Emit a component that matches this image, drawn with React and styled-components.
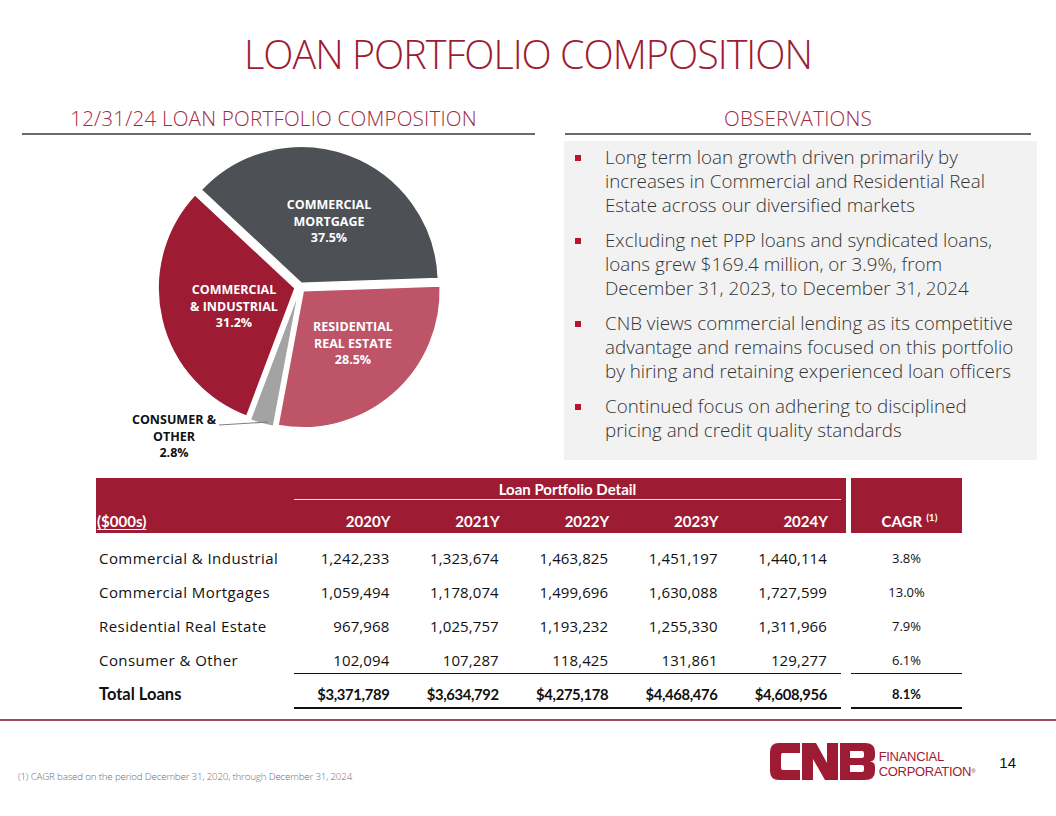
import React from "react";
import styled, { createGlobalStyle } from "styled-components";

const RED = "#9e1c33";

const GlobalStyle = createGlobalStyle`
  html, body {
    margin: 0;
    padding: 0;
    background: #ffffff;
  }
  body {
    font-family: "Open Sans", "Liberation Sans", sans-serif;
  }
`;

const Slide = styled.div`
  width: 1056px;
  height: 816px;
  overflow: hidden;
  background: #ffffff;
  display: flex;
  flex-direction: column;
`;

const Title = styled.h1`
  margin: 0;
  padding-top: 34px;
  height: 76px;
  box-sizing: border-box;
  text-align: center;
  font-family: "Open Sans", sans-serif;
  font-weight: 300;
  font-size: 39.5px;
  line-height: 40px;
  letter-spacing: -1px;
  color: ${RED};
`;

const Columns = styled.div`
  display: flex;
  gap: 30px;
  padding-left: 22px;
  margin-top: 26px;
`;

const Column = styled.div`
  width: ${(p) => p.$width}px;
  display: flex;
  flex-direction: column;
`;

const SectionHeading = styled.h2`
  margin: 0;
  height: 33px;
  box-sizing: border-box;
  padding: 3px ${(p) => p.$shift || 0}px 0 0;
  border-bottom: 2px solid #6a6a6a;
  text-align: center;
  font-family: "Open Sans", sans-serif;
  font-weight: 300;
  font-size: 20.6px;
  line-height: 26px;
  letter-spacing: 0.2px;
  color: #a02a40;
`;

const ObservationBox = styled.div`
  margin: 6px -6px 0 -1px;
  height: 319px;
  box-sizing: border-box;
  background: #f2f2f2;
  padding: 4px 4px 0 11px;
`;

const BulletList = styled.ul`
  list-style: none;
  margin: 0;
  padding: 0;
`;

const Bullet = styled.li`
  display: flex;
  margin-bottom: 11px;
  font-weight: 300;
  font-size: 18.8px;
  line-height: 24px;
  letter-spacing: 0;
  color: #333333;
  white-space: nowrap;

  &::before {
    content: "";
    flex: none;
    width: 6px;
    height: 6px;
    margin: 10px 24px 0 0;
    background: #c0122c;
  }
`;

const Table = styled.div`
  margin: 13px 0 0 96px;
  width: 866px;
  font-family: "Open Sans", sans-serif;
  color: #111;
`;

const HeaderRow = styled.div`
  display: flex;
  margin-bottom: 13px;
`;

const MainHeader = styled.div`
  width: 750px;
  height: 55px;
  background: ${RED};
  display: flex;
  flex-direction: column;
  font-family: Lato, "Open Sans", sans-serif;
  font-weight: 700;
  font-size: 15px;
  color: #ffffff;
`;

const GroupTitle = styled.div`
  margin-left: 198px;
  width: 547px;
  height: 22px;
  box-sizing: border-box;
  border-bottom: 1.5px solid #f4dfe3;
  text-align: center;
  line-height: 22px;
`;

const HeaderCells = styled.div`
  display: flex;
  align-items: flex-end;
  flex: 1;
  padding-bottom: 3px;
`;

const CagrHeader = styled.div`
  margin-left: 5px;
  width: 111px;
  height: 55px;
  box-sizing: border-box;
  padding: 0 0 3px 6px;
  background: ${RED};
  display: flex;
  align-items: flex-end;
  justify-content: center;
  font-family: Lato, "Open Sans", sans-serif;
  font-weight: 700;
  font-size: 15px;
  line-height: 18px;
  color: #ffffff;

  sup {
    font-size: 10px;
    line-height: 10px;
    margin-left: 4px;
    align-self: flex-start;
    margin-top: 34px;
  }
`;

const Unit = styled.div`
  width: 198px;
  padding-left: 1px;
  text-decoration: underline;
  text-underline-offset: 2px;
`;

const Row = styled.div`
  display: flex;
  height: 24px;
  margin-bottom: 10px;
  font-family: "Open Sans", sans-serif;
  font-size: 15px;
  line-height: 24px;
`;

const RowLabel = styled.div`
  width: 198px;
  padding-left: 3px;
  box-sizing: border-box;
  white-space: nowrap;
  letter-spacing: ${(p) => (p.$total ? "0" : "0.45px")};
  font-family: ${(p) => (p.$total ? "Lato, sans-serif" : "'Open Sans', sans-serif")};
  font-weight: ${(p) => (p.$total ? 700 : 400)};
  font-size: ${(p) => (p.$total ? "16.5px" : "15px")};
`;

const Numbers = styled.div`
  display: flex;
  width: 547px;
  height: ${(p) => (p.$rule ? 24 + p.$rule : 24)}px;
  box-sizing: border-box;
  border-bottom: ${(p) => (p.$rule ? `${p.$rule}px solid #111` : "none")};
  font-family: ${(p) => (p.$total ? "Lato, sans-serif" : "'Open Sans', sans-serif")};
  font-weight: ${(p) => (p.$total ? 700 : 400)};
  font-size: ${(p) => (p.$total ? "14.8px" : "15px")};
  letter-spacing: ${(p) => (p.$total ? "-0.35px" : "0.1px")};
`;

const Cell = styled.div`
  width: 109.4px;
  padding-right: 14px;
  box-sizing: border-box;
  text-align: right;
  white-space: nowrap;
`;

const CagrCell = styled.div`
  margin-left: 10px;
  width: 111px;
  height: ${(p) => (p.$rule ? 24 + p.$rule : 24)}px;
  box-sizing: border-box;
  border-bottom: ${(p) => (p.$rule ? `${p.$rule}px solid #111` : "none")};
  text-align: center;
  font-family: ${(p) => (p.$total ? "Lato, sans-serif" : "'Open Sans', sans-serif")};
  font-weight: ${(p) => (p.$total ? 700 : 400)};
  font-size: 13px;
`;

const Divider = styled.hr`
  margin: 3px 0 0;
  border: none;
  height: 2px;
  background: #a3485b;
`;

const Footer = styled.footer`
  display: flex;
  align-items: flex-start;
  padding: 22px 40px 0 18px;
`;

const Footnote = styled.div`
  flex: 1;
  margin-top: 27px;
  font-family: "Open Sans", sans-serif;
  font-weight: 300;
  font-size: 9.8px;
  letter-spacing: -0.2px;
  color: #6f6f6f;
`;

const Logo = styled.div`
  display: flex;
  align-items: center;
  gap: 4px;
`;

const LogoText = styled.div`
  font-family: "Liberation Sans", Arial, sans-serif;
  font-size: 13px;
  line-height: 14px;
  letter-spacing: -0.3px;
  color: ${RED};
  padding-top: 6px;

  sup {
    font-size: 6px;
    vertical-align: 3px;
  }
`;

const PageNumber = styled.div`
  margin: 11px 0 0 24px;
  font-family: "Liberation Sans", Arial, sans-serif;
  font-size: 15px;
  color: #111;
`;

const slices = [
  { name: "mortgage", from: 313, to: 88, color: "#4d5155", shift: 4 },
  { name: "residential", from: 88, to: 190.6, color: "#bd5467", shift: 5 },
  { name: "consumer", from: 190.6, to: 200.7, color: "#a3a3a3", shift: 5 },
  { name: "industrial", from: 200.7, to: 313, color: "#9e1c33", shift: 5 },
];

const CX = 300;
const CY = 287;
const R = 137;

function polar(angle, r) {
  const a = (angle * Math.PI) / 180;
  return [r * Math.sin(a), -r * Math.cos(a)];
}

function slicePath({ from, to, shift }) {
  const span = (to - from + 360) % 360;
  const [dx, dy] = polar(from + span / 2, shift);
  const [ax, ay] = polar(from, R);
  const [bx, by] = polar(from + span, R);
  const large = span > 180 ? 1 : 0;
  const ox = CX + dx;
  const oy = CY + dy;
  return `M${ox},${oy} L${ox + ax},${oy + ay} A${R},${R} 0 ${large} 1 ${ox + bx},${oy + by} Z`;
}

const PieLabel = styled.text`
  font-family: "Open Sans", sans-serif;
  font-weight: 700;
  font-size: 12.5px;
  fill: ${(p) => p.$color || "#ffffff"};
  text-anchor: middle;
`;

function PieChart() {
  const label = (x, y, lines, color) =>
    lines.map((line, i) => (
      <PieLabel key={line} x={x} y={y + i * 16.5} $color={color}>
        {line}
      </PieLabel>
    ));
  return (
    <svg width="513" height="330" viewBox="22 135 513 330">
      {slices.map((s) => (
        <path
          key={s.name}
          d={slicePath(s)}
          fill={s.color}
          stroke="#ffffff"
          strokeWidth="1.5"
          strokeLinejoin="round"
        />
      ))}
      <line x1="219" y1="425" x2="268" y2="422" stroke="#7f7f7f" strokeWidth="1.2" />
      {label(329, 209, ["COMMERCIAL", "MORTGAGE", "37.5%"])}
      {label(234, 294, ["COMMERCIAL", "& INDUSTRIAL", "31.2%"])}
      {label(353, 331, ["RESIDENTIAL", "REAL ESTATE", "28.5%"])}
      {label(174, 424, ["CONSUMER &", "OTHER", "2.8%"], "#111111")}
    </svg>
  );
}

function CnbMark() {
  return (
    <svg width="105" height="37" viewBox="0 0 105 37">
      <path
        fill={RED}
        d="M30,0 H9 Q0,0 0,9 V28 Q0,37 9,37 H30 V27 H13 Q11,27 11,25 V12 Q11,10 13,10 H30 Z"
      />
      <path fill={RED} d="M32,37 V0 H46 L57,20 V0 H68 V37 H55 L43,16 V37 Z" />
      <path
        fill={RED}
        fillRule="evenodd"
        d="M70,0 H95 Q105,0 105,9 V13 Q105,18 100,18.5 Q105,19 105,24 V28 Q105,37 95,37 H70 Z M80,8 H92 Q94,8 94,10 V13 Q94,15 92,15 H80 Z M80,22 H92 Q94,22 94,24 V27 Q94,29 92,29 H80 Z"
      />
    </svg>
  );
}

const bullets = [
  [
    "Long term loan growth driven primarily by",
    "increases in Commercial and Residential Real",
    "Estate across our diversified markets",
  ],
  [
    "Excluding net PPP loans and syndicated loans,",
    "loans grew $169.4 million, or 3.9%, from",
    "December 31, 2023, to December 31, 2024",
  ],
  [
    "CNB views commercial lending as its competitive",
    "advantage and remains focused on this portfolio",
    "by hiring and retaining experienced loan officers",
  ],
  [
    "Continued focus on adhering to disciplined",
    "pricing and credit quality standards",
  ],
];

const years = ["2020Y", "2021Y", "2022Y", "2023Y", "2024Y"];

const rows = [
  {
    label: "Commercial & Industrial",
    values: ["1,242,233", "1,323,674", "1,463,825", "1,451,197", "1,440,114"],
    cagr: "3.8%",
  },
  {
    label: "Commercial Mortgages",
    values: ["1,059,494", "1,178,074", "1,499,696", "1,630,088", "1,727,599"],
    cagr: "13.0%",
  },
  {
    label: "Residential Real Estate",
    values: ["967,968", "1,025,757", "1,193,232", "1,255,330", "1,311,966"],
    cagr: "7.9%",
  },
  {
    label: "Consumer & Other",
    values: ["102,094", "107,287", "118,425", "131,861", "129,277"],
    cagr: "6.1%",
    rule: 1.5,
  },
  {
    label: "Total Loans",
    values: ["$3,371,789", "$3,634,792", "$4,275,178", "$4,468,476", "$4,608,956"],
    cagr: "8.1%",
    rule: 2.5,
    total: true,
  },
];

export default function App() {
  return (
    <Slide>
      <GlobalStyle />
      <Title>LOAN PORTFOLIO COMPOSITION</Title>

      <Columns>
        <Column $width={513}>
          <SectionHeading $shift={10}>12/31/24 LOAN PORTFOLIO COMPOSITION</SectionHeading>
          <PieChart />
        </Column>
        <Column $width={466}>
          <SectionHeading>OBSERVATIONS</SectionHeading>
          <ObservationBox>
            <BulletList>
              {bullets.map((lines) => (
                <Bullet key={lines[0]}>
                  <span>
                    {lines.map((line, i) => (
                      <React.Fragment key={line}>
                        {i > 0 && <br />}
                        {line}
                      </React.Fragment>
                    ))}
                  </span>
                </Bullet>
              ))}
            </BulletList>
          </ObservationBox>
        </Column>
      </Columns>

      <Table>
        <HeaderRow>
          <MainHeader>
            <GroupTitle>Loan Portfolio Detail</GroupTitle>
            <HeaderCells>
              <Unit>($000s)</Unit>
              {years.map((y) => (
                <Cell key={y}>{y}</Cell>
              ))}
            </HeaderCells>
          </MainHeader>
          <CagrHeader>
            CAGR<sup>(1)</sup>
          </CagrHeader>
        </HeaderRow>

        {rows.map((r) => (
          <Row key={r.label}>
            <RowLabel $total={r.total}>{r.label}</RowLabel>
            <Numbers $rule={r.rule} $total={r.total}>
              {r.values.map((v, i) => (
                <Cell key={i}>{v}</Cell>
              ))}
            </Numbers>
            <CagrCell $rule={r.rule} $total={r.total}>
              {r.cagr}
            </CagrCell>
          </Row>
        ))}
      </Table>

      <Divider />

      <Footer>
        <Footnote>(1) CAGR based on the period December 31, 2020, through December 31, 2024</Footnote>
        <Logo>
          <CnbMark />
          <LogoText>
            FINANCIAL
            <br />
            CORPORATION<sup>®</sup>
          </LogoText>
        </Logo>
        <PageNumber>14</PageNumber>
      </Footer>
    </Slide>
  );
}
